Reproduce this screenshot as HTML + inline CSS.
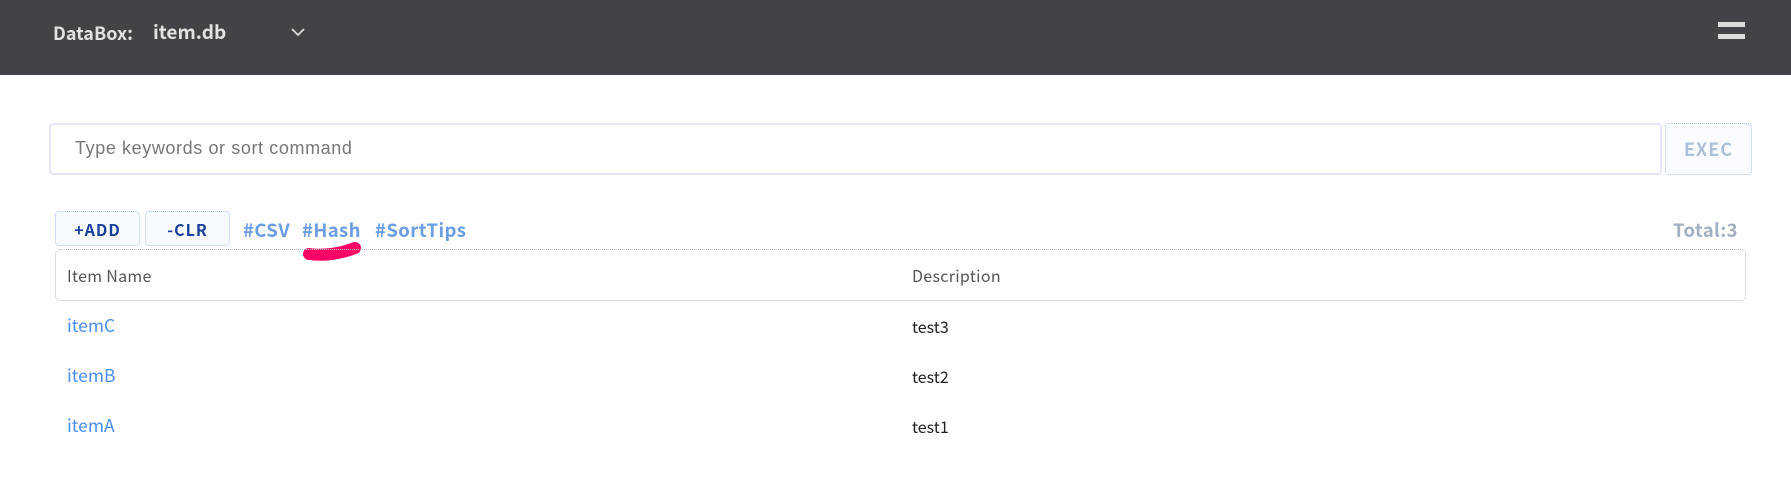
<!DOCTYPE html>
<html><head><meta charset="utf-8"><style>
*{margin:0;padding:0;box-sizing:border-box}
body{width:1791px;height:482px;background:#fff;position:relative;overflow:hidden;font-family:"Noto Sans CJK JP","Liberation Sans",sans-serif}
.hdr{position:absolute;left:0;top:0;width:1791px;height:75px;background:#434247}
.abs{position:absolute;white-space:nowrap}
.btn{position:absolute;top:211px;height:35px;border:1px dotted #a9c6ee;border-radius:4px;background:#f7faff;color:#173f9c;font-weight:bold;font-size:16px;letter-spacing:1px;display:flex;align-items:center;justify-content:center}
.tag{position:absolute;top:218px;color:#6a9de3;font-weight:bold;font-size:18.5px;letter-spacing:0.4px;line-height:24px}
.row{position:absolute;font-size:17.5px;line-height:22px}
</style></head><body>
<div class="hdr"></div>
<div class="abs" style="left:53px;top:21px;font-size:18px;font-weight:bold;color:#e2e2e2;line-height:24px">DataBox:</div>
<div class="abs" style="left:153px;top:20px;font-size:19px;font-weight:bold;color:#e2e2e2;line-height:24px">item.db</div>
<svg class="abs" style="left:290px;top:27px" width="16" height="10" viewBox="0 0 16 10"><path d="M2 2 L8 8 L14 2" stroke="#ddd" stroke-width="1.8" fill="none"/></svg>
<div class="abs" style="left:1718px;top:22px;width:27px;height:5px;background:#dcdcdc"></div>
<div class="abs" style="left:1718px;top:34px;width:27px;height:5px;background:#dcdcdc"></div>

<div class="abs" style="left:49px;top:123px;width:1613px;height:52px;border:2.5px solid #e6e6fa;border-radius:4px"></div>
<div class="abs" style="left:75px;top:136px;font-size:18px;color:#777;letter-spacing:0.6px;line-height:24px;font-family:'Liberation Sans',sans-serif">Type keywords or sort command</div>
<div class="abs" style="left:1665px;top:123px;width:87px;height:52px;border:1px dotted #a9c6ee;border-radius:3px;background:#fafcff;color:#aebfd9;font-weight:bold;font-size:18px;letter-spacing:1px;display:flex;align-items:center;justify-content:center">EXEC</div>

<div class="btn" style="left:55px;width:85px">+ADD</div>
<div class="btn" style="left:145px;width:85px">-CLR</div>
<div class="tag" style="left:243px">#CSV</div>
<div class="tag" style="left:302px">#Hash</div>
<div class="tag" style="left:375px">#SortTips</div>
<svg class="abs" style="left:300px;top:236px" width="66" height="28"><path d="M9 18 C22 20 40 18 55 12" stroke="#ff0066" stroke-width="12" stroke-linecap="round" fill="none"/></svg>
<div class="tag" style="left:auto;right:53px;color:#a3afc2">Total:3</div>

<div class="abs" style="left:55px;top:249px;width:1691px;height:52px;border:1px dotted #bbb;border-radius:5px"></div>
<div class="abs" style="left:67px;top:264px;font-size:16px;color:#555;line-height:22px;letter-spacing:0.3px">Item Name</div>
<div class="abs" style="left:912px;top:264px;font-size:16px;color:#555;line-height:22px;letter-spacing:0.3px">Description</div>

<div class="row" style="left:67px;top:315px;color:#4a8ef0">itemC</div>
<div class="row" style="left:912px;top:315px;color:#222;font-size:16px">test3</div>
<div class="row" style="left:67px;top:365px;color:#4a8ef0">itemB</div>
<div class="row" style="left:912px;top:365px;color:#222;font-size:16px">test2</div>
<div class="row" style="left:67px;top:415px;color:#4a8ef0">itemA</div>
<div class="row" style="left:912px;top:415px;color:#222;font-size:16px">test1</div>
</body></html>
